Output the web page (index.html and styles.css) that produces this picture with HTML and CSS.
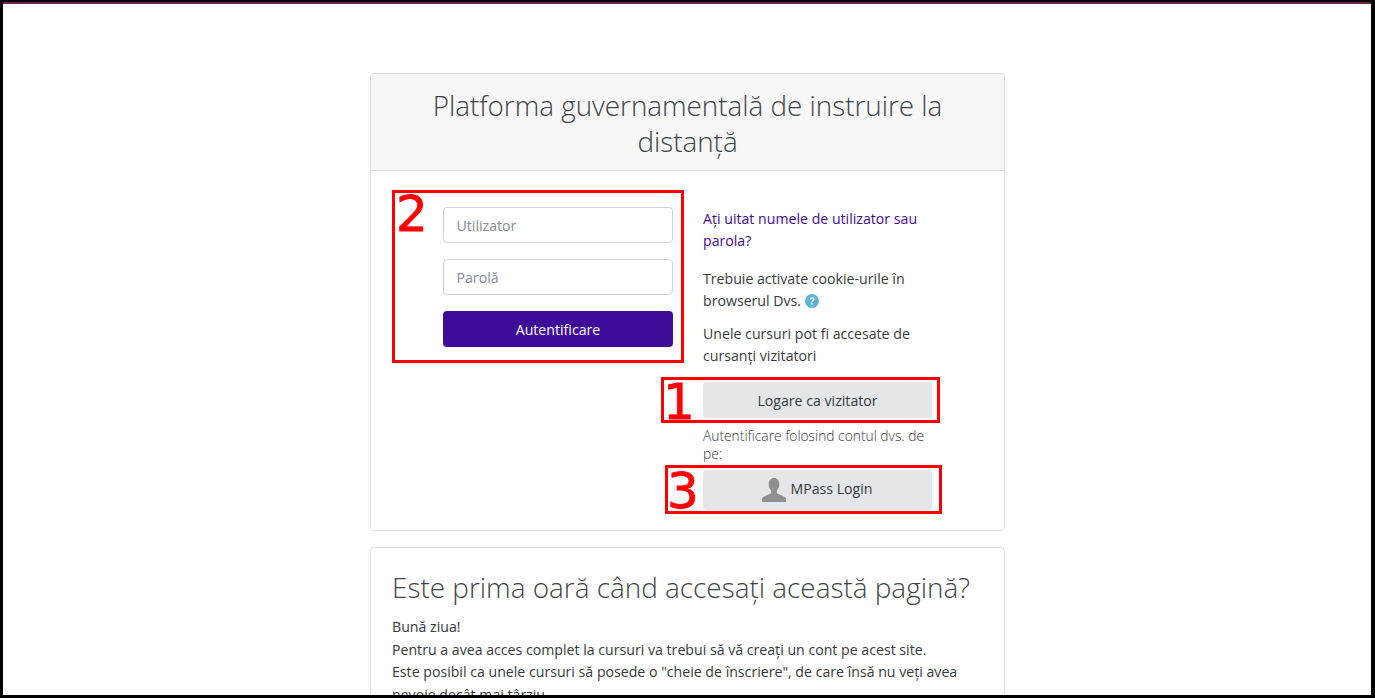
FILE: index.html
```html
<!DOCTYPE html>
<html lang="ro">
<head>
<meta charset="utf-8">
<title>Platforma guvernamentală de instruire la distanță</title>
<link rel="stylesheet" href="styles.css">
</head>
<body>
<div class="frame">
  <div class="stripe"></div>
  <div class="page">
    <div class="card">
      <div class="card-head">
        <h1>Platforma guvernamentală de instruire la distanță</h1>
      </div>
      <div class="login-row">
        <form class="login-form">
          <input class="field" type="text" placeholder="Utilizator">
          <input class="field" type="password" placeholder="Parolă">
          <button class="btn btn-primary" type="button">Autentificare</button>
        </form>
        <div class="login-side">
          <p class="line forgot"><a href="#">Aţi uitat numele de utilizator sau parola?</a></p>
          <p class="line">Trebuie activate cookie-urile în browserul Dvs.
            <svg class="help" viewBox="0 0 16 16" width="14" height="14"><circle cx="8" cy="8" r="8" fill="#5bb3d6"/><path d="M5.3 6.2C5.4 4.6 6.6 3.7 8.1 3.7c1.6 0 2.8 1 2.8 2.3 0 1.1-.6 1.7-1.5 2.3-.7.5-.9.8-.9 1.5H7c0-1.2.3-1.8 1.2-2.4.7-.5 1-.8 1-1.3 0-.6-.5-1-1.1-1-.7 0-1.2.4-1.3 1.1zM7 10.6h1.6v1.7H7z" fill="#fff"/></svg>
          </p>
          <p class="line guest-note">Unele cursuri pot fi accesate de cursanţi vizitatori</p>
          <button class="btn btn-grey btn-guest" type="button">Logare ca vizitator</button>
          <p class="idp-note">Autentificare folosind contul dvs. de pe:</p>
          <button class="btn btn-grey btn-idp" type="button">
            <svg class="avatar" viewBox="0 0 24 24" width="24" height="24"><path d="M12 0c3.3 0 5.3 2.6 5.3 6 0 2.6-1 5-2.4 6.300v2.500c0 1 3.500 2.100 6.400 3.500 1.500.7 2.700 1.700 2.700 3V24H0v-2.700c0-1.300 1.200-2.300 2.700-3 2.900-1.400 6.400-2.500 6.400-3.500v-2.500C7.700 11 6.700 8.600 6.700 6c0-3.400 2-6 5.300-6z" fill="#8f8f8f"/></svg>
            <span class="idp-name">MPass Login</span>
          </button>
        </div>
      </div>
    </div>
    <div class="card card-intro">
      <h2>Este prima oară când accesaţi această pagină?</h2>
      <p>Bună ziua!<br>
      Pentru a avea acces complet la cursuri va trebui să vă creaţi un cont pe acest site.<br>
      Este posibil ca unele cursuri să posede o "cheie de înscriere", de care însă nu veţi avea nevoie decât mai târziu.</p>
    </div>
  </div>
  <div class="mark mark-form"><span>2</span></div>
  <div class="mark mark-guest"><span>1</span></div>
  <div class="mark mark-mpass"><span>3</span></div>
</div>
</body>
</html>
```

FILE: styles.css
```css
* {box-sizing:border-box}
html, body {margin:0;height:100%;overflow:hidden}
body {font-family:"Open Sans","Noto Sans",sans-serif;font-size:14.15px;line-height:22.5px;color:#373a3c;background:#fff}
.frame {position:relative;height:698px;overflow:hidden;border:solid #000;border-width:2px 4px 3px 3px;background:#fff}
.stripe {height:2px;background:#6a2250}
.page {width:635px;margin:69px 0 0 367px}
.card {border:1px solid #dfdfdf;border-radius:4px;background:#fff}
.card-head {height:97px;padding:13px 20px 0;background:#f7f7f7;border-bottom:1px solid #dfdfdf;border-radius:4px 4px 0 0}
h1 {margin:0;font-size:27.8px;line-height:36px;font-weight:300;text-align:center;color:#3f4448}
.login-row {display:grid;grid-template-columns:1fr 1fr;height:359px}
.login-form {display:flex;flex-direction:column;gap:16px;padding:36px 15px 0 72px}
.field {width:230px;height:36px;padding:0 12.5px;border:1px solid #ced4da;border-radius:4px;font:14.15px "Open Sans",sans-serif;color:#495057;background:#fff}
.field::placeholder {color:#868e96;opacity:1}
.btn {display:block;height:36px;border:0;border-radius:4px;font:14.15px "Open Sans",sans-serif;color:#373a3c;cursor:pointer}
.btn-primary {width:230px;background:#3f0c99;color:#fff}
.btn-grey {width:229px;background:#e4e7ea}
.btn-guest {padding-top:2px}
.btn-idp {display:flex;align-items:center;justify-content:center;gap:4px;height:40px;margin-top:7px}
.idp-name {margin-bottom:3px}
.login-side {padding:36.6px 15px 0 15px}
.line {margin:0 0 10px;width:236px}
.forgot {margin-bottom:15px}
.guest-note {margin-bottom:14.4px}
a {color:#3f0c99;text-decoration:none}
.help {vertical-align:-2px}
.idp-note {margin:9px 0 0;width:236px;font-size:13.8px;line-height:18px;font-weight:300}
.card-intro {margin-top:16px;height:300px;padding:19px 20px 0 21px}
h2 {margin:0 0 9px;font-size:27.9px;line-height:40px;font-weight:300;color:#3f4448}
.card-intro p {margin:0}
.mark {position:absolute;border:3px solid #f00;color:#f00;font-family:"DejaVu Sans",sans-serif;line-height:1}
.mark span {position:absolute;font-size:50px;-webkit-text-stroke:.8px #f00}
.mark-form {left:389px;top:188px;width:292px;height:173px}
.mark-form span {left:1px;top:-4px}
.mark-guest {left:658px;top:375px;width:279px;height:46px}
.mark-guest span {left:-1px;top:-3px}
.mark-mpass {left:662px;top:463px;width:277px;height:49px}
.mark-mpass span {left:-1px;top:-2px}
```
